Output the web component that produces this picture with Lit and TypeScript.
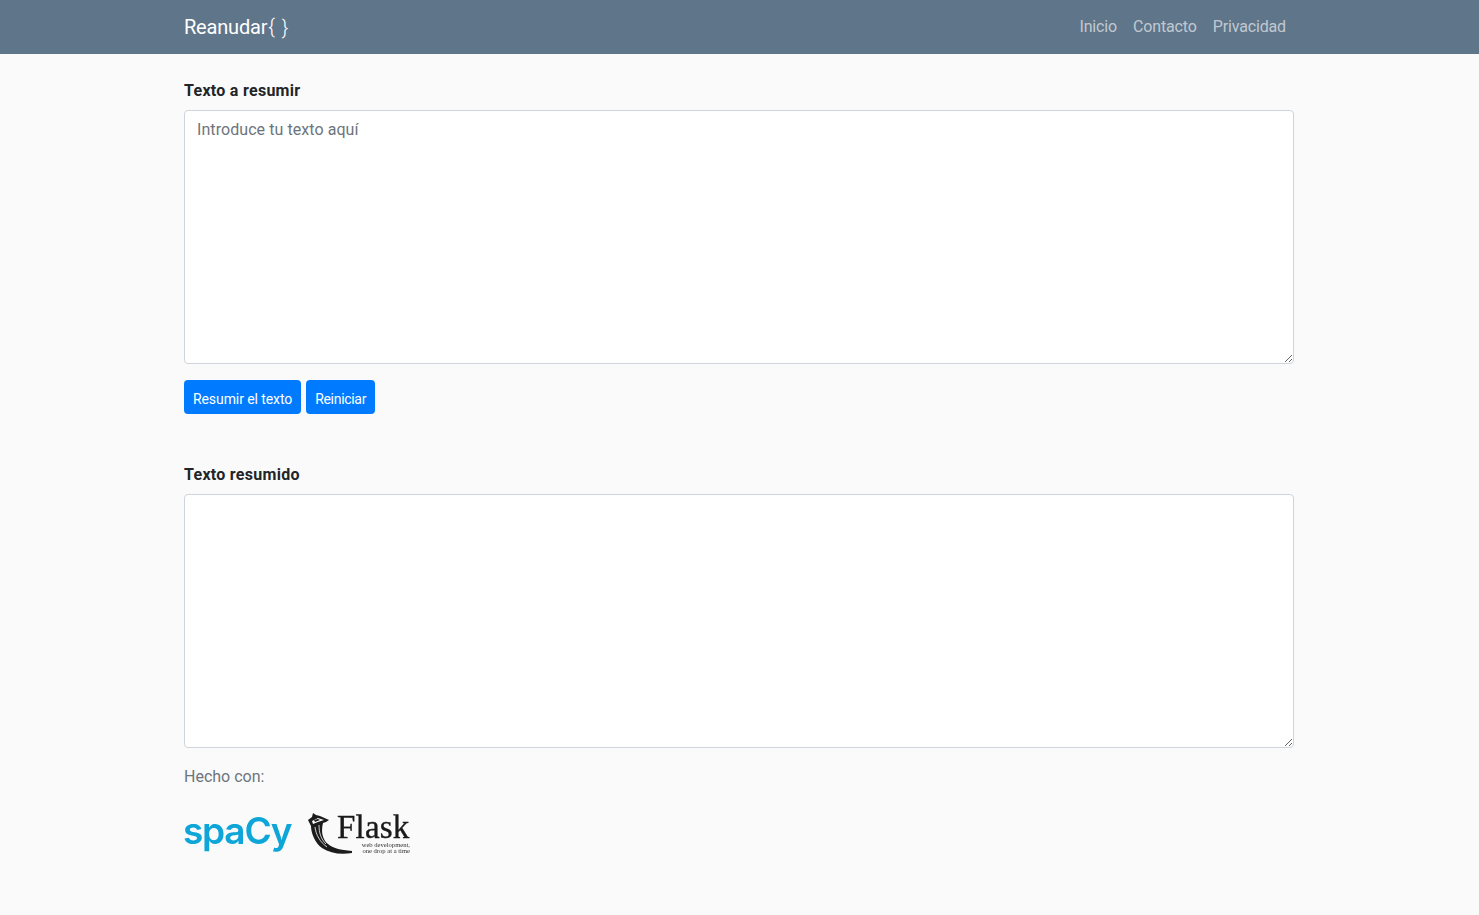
import { LitElement, html, css } from "lit";
import { customElement } from "lit/decorators.js";

@customElement("app-root")
export class AppRoot extends LitElement {
  static styles = css`
    :host {
      display: block;
      min-height: 100vh;
      background: #fafafa;
      color: #212529;
      font-family: Roboto, "Noto Sans", sans-serif;
      font-size: 16px;
      line-height: 24px;
    }
    * { box-sizing: border-box; }
    .bar { background: #5f7589; height: 54px; }
    .wrap { width: 1110px; margin-left: 184px; }
    .bar .wrap { display: flex; align-items: center; justify-content: space-between; height: 54px; }
    .brand { color: #fff; font-size: 20px; letter-spacing: -0.2px; }
    .brace { font-weight: 300; letter-spacing: 1px; margin-left: 1px; }
    .links { display: flex; gap: 16px; padding-right: 8px; margin-top: -1px; }
    .links a { color: rgba(255,255,255,.62); font-size: 16px; letter-spacing: -0.15px; }
    main { padding-top: 24px; }
    label { display: block; font-weight: 700; letter-spacing: 0.28px; padding-top: 1px; margin-bottom: 7px; }
    textarea {
      display: block;
      width: 100%;
      height: 254px;
      border: 1px solid #ced4da;
      border-radius: 4px;
      background: #fff;
      padding: 7px 12px 5px;
      font: inherit;
      letter-spacing: 0.07px;
      color: #495057;
      outline: none;
    }
    textarea::placeholder { color: #6c757d; opacity: 1; }
    .actions { display: flex; gap: 5px; margin: 16px 0 48px; }
    button {
      background: #007bff;
      color: #fff;
      border: none;
      border-radius: 4px;
      height: 34px;
      padding: 3px 9px 0;
      font: inherit;
      font-size: 14px;
      letter-spacing: -0.09px;
    }
    button.reset { letter-spacing: -0.3px; }
    .made { color: #6c757d; margin-top: 16px; padding-top: 1px; height: 24px; letter-spacing: 0; }
    .logos { display: flex; align-items: flex-start; margin-top: 22px; height: 45px; margin-left: -1px; }
    .spacy {
      color: #0ea5d8;
      font-family: Inter, "Liberation Sans", sans-serif;
      font-weight: 600;
      font-size: 37px;
      line-height: 42px;
      letter-spacing: -1.2px;
      width: 124px;
      filter: blur(0.4px);
    }
    .flask { display: flex; width: 104px; height: 45px; filter: blur(0.3px); }
    .flask svg { width: 46px; height: 44px; flex: none; margin-right: -16px; margin-top: 1px; }
    .flask-text { flex: 1; font-family: "Liberation Serif", serif; color: #1a1a1a; }
    .flask-name {
      font-size: 33px;
      line-height: 30px;
      padding-top: 2px;
      letter-spacing: 0.2px;
      -webkit-text-stroke: 0.35px #1a1a1a;
    }
    .flask-tag {
      font-size: 6.6px;
      line-height: 5.5px;
      text-align: right;
      color: #333;
      margin-right: 1px;
    }
  `;

  render() {
    return html`
      <nav class="bar">
        <div class="wrap">
          <span class="brand">Reanudar<span class="brace">{ }</span></span>
          <div class="links"><a>Inicio</a><a>Contacto</a><a>Privacidad</a></div>
        </div>
      </nav>
      <main class="wrap">
        <label>Texto a resumir</label>
        <textarea placeholder="Introduce tu texto aquí"></textarea>
        <div class="actions"><button>Resumir el texto</button><button class="reset">Reiniciar</button></div>
        <label>Texto resumido</label>
        <textarea></textarea>
        <div class="made">Hecho con:</div>
        <div class="logos">
          <div class="spacy">spaCy</div>
          <div class="flask">
            <svg viewBox="0 0 46 44" aria-hidden="true">
              <path fill="#1c1c1c" d="M1 9 L5 6 L6 2 L9 4 L13 5 L22 9 L19 11 L16 12 C14 20 15 28 21 33 C26 37 33 39 45 40 L45 42 C33 44 23 42 15 37 C8 32 4 22 4 15 Z"/>
              <path fill="#fafafa" d="M5 10 L11 7 L17 9 L11 11 L6 13 Z"/>
              <path fill="none" stroke="#fafafa" stroke-width="0.8" d="M8 16 C9 24 13 31 20 36 M12 14 C12 22 14 28 19 33"/>
              <path fill="#1c1c1c" d="M7 9 L11 8 L13 9 L8 11 Z"/>
            </svg>
            <div class="flask-text">
              <div class="flask-name">Flask</div>
              <div class="flask-tag">web development,<br />one drop at a time</div>
            </div>
          </div>
        </div>
      </main>
    `;
  }
}
